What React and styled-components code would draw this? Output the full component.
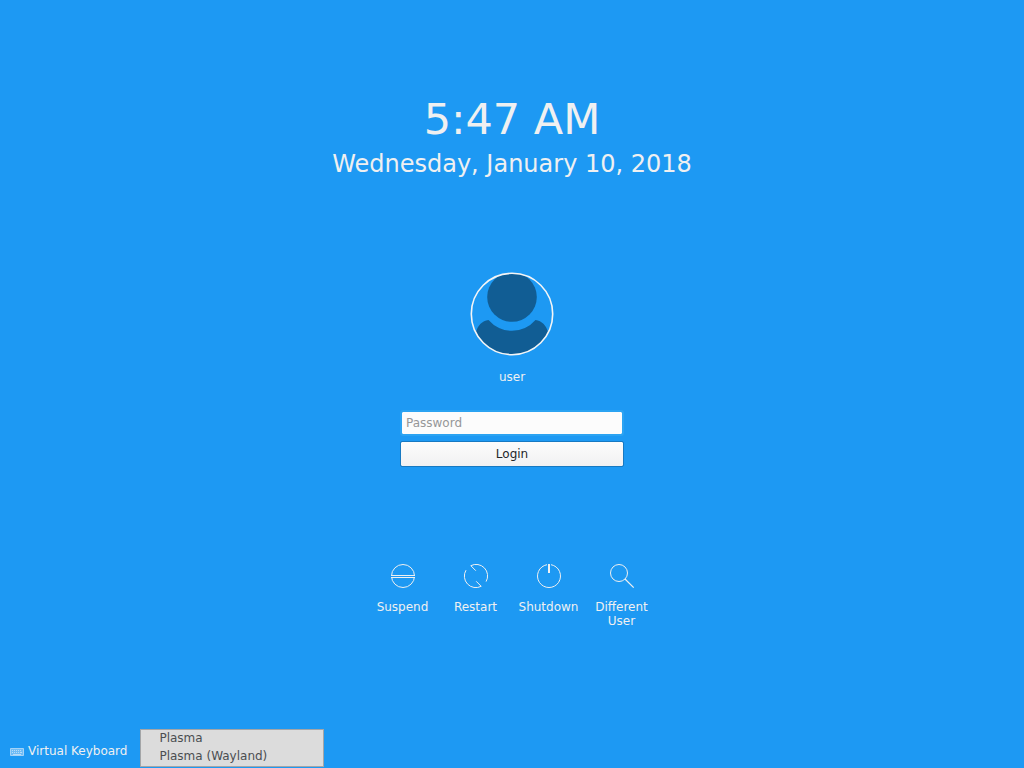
import React from "react";
import styled, { createGlobalStyle } from "styled-components";

const GlobalStyle = createGlobalStyle`
  *, *::before, *::after { box-sizing: border-box; }
  body {
    margin: 0;
    background: #1d99f3;
    color: #eff0f1;
    font-family: "DejaVu Sans", sans-serif;
    font-size: 12px;
    line-height: 14px;
  }
  button, input { font: inherit; }
`;

const Screen = styled.div`
  min-height: 100vh;
  display: flex;
  flex-direction: column;
`;

const Clock = styled.header`
  padding-top: 94px;
  text-align: center;
`;

const Time = styled.div`
  font-size: 43px;
  line-height: 50px;
`;

const CalendarDate = styled.div`
  margin-top: 6px;
  font-size: 24px;
  line-height: 28px;
`;

const Main = styled.main`
  flex: 1;
  display: flex;
  flex-direction: column;
  align-items: center;
  padding-top: 94px;
`;

const Avatar = styled.svg`
  width: 84px;
  height: 84px;
  display: block;
`;

const UserName = styled.div`
  margin-top: 14px;
`;

const LoginForm = styled.form`
  width: 224px;
  margin-top: 26px;
  display: flex;
  flex-direction: column;
  gap: 5px;
`;

const PasswordInput = styled.input`
  width: 100%;
  height: 26px;
  padding: 0 4px;
  border: 2px solid #2ba3f2;
  border-radius: 3px;
  background: #fcfcfc;
  background-clip: padding-box;
  color: #31363b;
  outline: none;
  &::placeholder { color: #969798; opacity: 1; }
`;

const LoginButton = styled.button`
  width: 100%;
  height: 26px;
  padding: 0;
  border: 1px solid #1779c2;
  border-radius: 2px;
  background: linear-gradient(#fcfcfc, #f1f1f2);
  background-clip: padding-box;
  color: #232629;
`;

const Actions = styled.nav`
  display: flex;
  margin-top: 93px;
`;

const ActionButton = styled.button`
  width: 73px;
  padding: 0;
  border: 0;
  background: none;
  color: inherit;
  display: flex;
  flex-direction: column;
  align-items: center;
  gap: 8px;
`;

const ActionIcon = styled.svg`
  width: 32px;
  height: 32px;
  fill: none;
  stroke: #eff0f1;
  stroke-width: 1;
`;

const Footer = styled.footer`
  display: flex;
  align-items: flex-end;
  gap: 13px;
  padding: 0 10px 1px;
`;

const KeyboardButton = styled.button`
  display: flex;
  align-items: center;
  gap: 4px;
  padding: 0;
  margin-bottom: 9px;
  border: 0;
  background: none;
  color: inherit;
`;

const KeyboardIcon = styled.svg`
  width: 14px;
  height: 14px;
`;

const SessionMenu = styled.div`
  width: 184px;
  border: 1px solid #a3a5a7;
  background: #dcdcdc;
  display: flex;
  flex-direction: column;
`;

const SessionItem = styled.button`
  height: 18px;
  padding: 0 18px 2px;
  border: 0;
  background: none;
  color: #4b4e51;
  text-align: left;
`;

const actions = [
  {
    label: "Suspend",
    icon: (
      <>
        <circle cx="16" cy="16" r="11.5" />
        <path d="M4 15.5H28M4 17.5H28" />
        <path stroke="#1d99f3" d="M4 16.5H28" />
      </>
    ),
  },
  {
    label: "Restart",
    icon: (
      <path d="M6 10.2A11.5 11.5 0 0 0 21.2 26.3L16.2 21.3M26.1 21.6A11.5 11.5 0 0 0 10.8 5.7L15.8 10.7" />
    ),
  },
  {
    label: "Shutdown",
    icon: (
      <>
        <path d="M14 4.7A11.5 11.5 0 1 0 18 4.7" />
        <path strokeWidth="2" d="M16 4V13" />
      </>
    ),
  },
  {
    label: "Different User",
    icon: (
      <>
        <circle cx="13" cy="13" r="8.5" />
        <path strokeWidth="1.2" d="M19 19L27.7 27.7" />
      </>
    ),
  },
];

const sessions = ["Plasma", "Plasma (Wayland)"];

export default function App() {
  return (
    <Screen>
      <GlobalStyle />
      <Clock>
        <Time>5:47 AM</Time>
        <CalendarDate>Wednesday, January 10, 2018</CalendarDate>
      </Clock>
      <Main>
        <Avatar viewBox="0 0 84 84" aria-hidden="true">
          <defs>
            <clipPath id="avatar-clip">
              <circle cx="42" cy="42" r="40.5" />
            </clipPath>
          </defs>
          <g clipPath="url(#avatar-clip)" fill="#115d94">
            <circle cx="42" cy="25" r="24.8" />
            <path d="M18.5 48A31 31 0 0 0 65.5 48C72 49 76 53 78 60V84H6V60C8 53 12 49 18.5 48Z" />
          </g>
          <circle cx="42" cy="42" r="40.7" fill="none" stroke="#f4f5f6" strokeWidth="1.6" />
        </Avatar>
        <UserName>user</UserName>
        <LoginForm onSubmit={(event) => event.preventDefault()}>
          <PasswordInput type="password" placeholder="Password" aria-label="Password" />
          <LoginButton type="submit">Login</LoginButton>
        </LoginForm>
        <Actions aria-label="Session actions">
          {actions.map(({ label, icon }) => (
            <ActionButton type="button" key={label}>
              <ActionIcon viewBox="0 0 32 32" aria-hidden="true">{icon}</ActionIcon>
              {label}
            </ActionButton>
          ))}
        </Actions>
      </Main>
      <Footer>
        <KeyboardButton type="button">
          <KeyboardIcon viewBox="0 0 14 14" aria-hidden="true">
            <path fill="#6fbcf6" stroke="#a4d3f7" d="M.5 4.5H13.5V11.5H.5Z" />
            <path
              stroke="#b9dcf8"
              d="M2 6.5H3M4 6.5H5M6 6.5H7M8 6.5H9M10 6.5H11M2 8.5H3M4 8.5H5M6 8.5H7M8 8.5H9M10 8.5H12M3 10.5H11"
            />
          </KeyboardIcon>
          Virtual Keyboard
        </KeyboardButton>
        <SessionMenu role="menu" aria-label="Desktop session">
          {sessions.map((name) => (
            <SessionItem type="button" role="menuitem" key={name}>{name}</SessionItem>
          ))}
        </SessionMenu>
      </Footer>
    </Screen>
  );
}
